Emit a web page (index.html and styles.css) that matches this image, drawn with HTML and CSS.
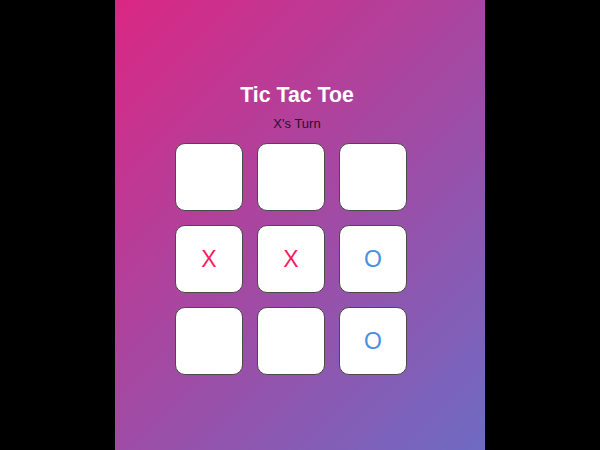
FILE: index.html
```html
<!DOCTYPE html>
<html>
<head>
<meta charset="utf-8">
<link rel="stylesheet" href="styles.css">
</head>
<body>
<main class="app">
  <h1 class="title">Tic Tac Toe</h1>
  <p class="status">X's Turn</p>
  <div class="board">
    <button class="cell"></button>
    <button class="cell"></button>
    <button class="cell"></button>
    <button class="cell x">X</button>
    <button class="cell x">X</button>
    <button class="cell o">O</button>
    <button class="cell"></button>
    <button class="cell"></button>
    <button class="cell o">O</button>
  </div>
</main>
</body>
</html>
```
FILE: styles.css
```css
html, body {
  margin: 0;
  padding: 0;
  background: #000;
  height: 100%;
}
.app {
  width: 370px;
  height: 450px;
  margin: 0 auto;
  box-sizing: border-box;
  padding: 82px 6px 0 0;
  background: linear-gradient(135deg, #da2783 0%, #6e6bc3 100%);
  font-family: "Liberation Sans", Arial, sans-serif;
  display: flex;
  flex-direction: column;
}
.title {
  margin: 0;
  font-size: 21.3px;
  line-height: 26px;
  font-weight: bold;
  color: #fff;
  text-align: center;
}
.status {
  margin: 8px 0 0;
  font-size: 13px;
  line-height: 15px;
  color: #2a0f2a;
  text-align: center;
}
.board {
  margin: 12px 0 0 60px;
  display: grid;
  grid-template-columns: repeat(3, 68px);
  grid-auto-rows: 68px;
  gap: 14px;
}
.cell {
  box-sizing: border-box;
  width: 68px;
  height: 68px;
  margin: 0;
  padding: 0;
  background: #fff;
  border: 1.5px solid #4a4a4a;
  border-radius: 10px;
  font-family: "Liberation Sans", Arial, sans-serif;
  font-size: 23px;
  display: flex;
  align-items: center;
  justify-content: center;
}
.x { color: #ff1a62; }
.o { color: #4a90e2; }
```
